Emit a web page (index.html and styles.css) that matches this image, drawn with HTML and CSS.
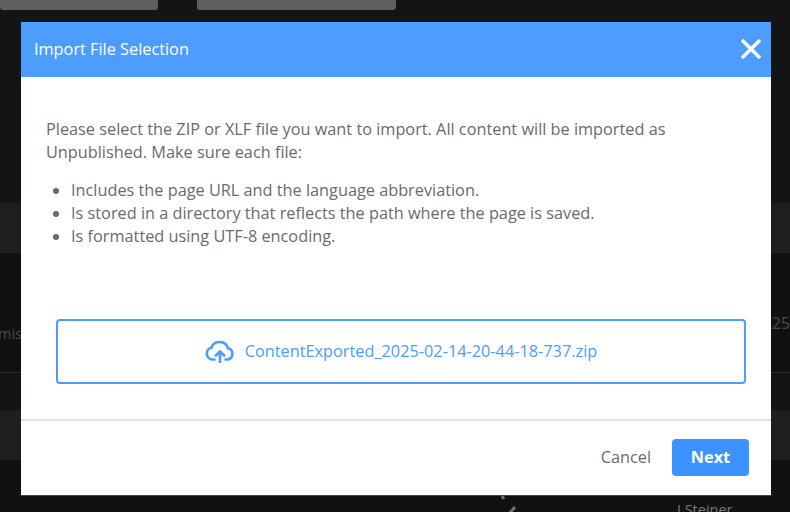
FILE: index.html
```html
<!DOCTYPE html>
<html lang="en">
<head>
<meta charset="utf-8">
<title>Import File Selection</title>
<link rel="stylesheet" href="styles.css">
</head>
<body>
<div class="backdrop">
  <div class="top-actions">
    <span class="top-btn top-btn-a"></span>
    <span class="top-btn top-btn-b"></span>
  </div>
  <div class="band band-first"></div>
  <div class="row">
    <span class="row-left">mis</span>
    <span class="row-right">25</span>
  </div>
  <div class="band band-second"></div>
  <div class="row-last">
    <svg class="row-check" viewBox="0 0 24 20" aria-hidden="true"><path d="M3 0l2 3M8 20l8-9" fill="none" stroke="#6e6f71" stroke-width="3"/></svg>
    <span class="row-name">J Steiner</span>
  </div>
</div>
<div class="modal" role="dialog" aria-labelledby="modal-title">
  <header class="modal-header">
    <h1 class="modal-title" id="modal-title">Import File Selection</h1>
    <button class="close" aria-label="Close">
      <svg viewBox="0 0 20 20" width="20" height="20" aria-hidden="true"><path d="M1 1l18 18M19 1L1 19" fill="none" stroke="#fff" stroke-width="3.4"/></svg>
    </button>
  </header>
  <div class="modal-body">
    <p class="intro">Please select the ZIP or XLF file you want to import. All content will be imported as Unpublished. Make sure each file:</p>
    <ul class="rules">
      <li>Includes the page URL and the language abbreviation.</li>
      <li>Is stored in a directory that reflects the path where the page is saved.</li>
      <li>Is formatted using UTF-8 encoding.</li>
    </ul>
    <div class="dropzone">
      <svg class="cloud" viewBox="0 0 30 22" width="30" height="22" aria-hidden="true">
        <path d="M9.500 18.500H7.500A6 6 0 0 1 6.300 6.700 8.800 8.800 0 0 1 23 7.300a5.700 5.700 0 0 1-.5 11.200H20.500" fill="none" stroke="#4d9dff" stroke-width="2.600" stroke-linecap="round"/>
        <path d="M15 21.500V10.500M10.800 14.500l4.200-4.200 4.200 4.200" fill="none" stroke="#4d9dff" stroke-width="2.600" stroke-linecap="round" stroke-linejoin="round"/>
      </svg>
      <span class="file-name">ContentExported_2025-02-14-20-44-18-737.zip</span>
    </div>
  </div>
  <footer class="modal-footer">
    <button class="btn-cancel">Cancel</button>
    <button class="btn-next">Next</button>
  </footer>
</div>
</body>
</html>
```
FILE: styles.css
```css
* { box-sizing: border-box; }
html, body { margin: 0; height: 100%; }
body {
  position: relative;
  width: 790px;
  height: 512px;
  overflow: hidden;
  background: #131416;
  font-family: "Open Sans", "Noto Sans", sans-serif;
}
.backdrop { display: flex; flex-direction: column; height: 512px; overflow: hidden; }
.top-actions { display: flex; gap: 39px; height: 203px; flex: none; }
.top-btn { display: block; height: 10px; background: #5f5f5f; border-radius: 0 0 3px 3px; }
.top-btn-a { width: 158px; }
.top-btn-b { width: 199px; }
.band { flex: none; height: 50px; background: #1e1e1e; }
.row {
  flex: none; height: 120px; padding-top: 70px;
  display: flex; justify-content: space-between; align-items: flex-start;
  border-bottom: 1px solid #2a2a2a;
  background: #111112; color: #4a4a4a; font-size: 14.5px; line-height: 22px;
}
.row-left { margin-left: -2px; }
.row-right { margin: -11px 0 0; font-size: 16px; }
.band-second { margin-top: 37px; }
.row-last { position: relative; flex: none; height: 52px; background: #111112; color: #77787a; font-size: 14.5px; }
.row-check { position: absolute; left: 499px; top: 36px; width: 24px; height: 20px; }
.row-name { position: absolute; left: 677px; top: 40px; }

.modal {
  position: absolute; left: 21px; top: 22px; width: 750px; height: 473px;
  display: flex; flex-direction: column; background: #fff;
  box-shadow: 0 1px 0 #444;
}
.modal-header {
  flex: none; height: 55px; padding: 0 10px 2px 13px;
  display: flex; align-items: center; justify-content: space-between;
  background: #4d9dff; color: #fff;
}
.modal-title { margin: 0; font-size: 16.3px; font-weight: 400; }
.close { padding: 0; border: 0; background: none; display: flex; }
.modal-body { flex: 1; padding: 41px 25px 0; color: #6a6a6a; font-size: 16.3px; line-height: 23px; }
.intro { margin: 0; }
.rules { margin: 15px 0 0; padding-left: 25px; }
.dropzone {
  margin: 71px 0 0 10px; width: 690px; height: 65px;
  display: flex; align-items: center; justify-content: center; gap: 10px;
  border: 2px solid #4d9dff; border-radius: 4px; color: #4d9dff;
}
.modal-footer {
  flex: none; height: 76px; padding: 18px 22px 0 0;
  display: flex; justify-content: flex-end; align-items: flex-start; gap: 21px;
  border-top: 2px solid #e2e2e2;
}
.btn-cancel { height: 35px; padding: 0; border: 0; background: none; color: #6a6a6a; font: inherit; font-size: 16.3px; }
.btn-next { width: 77px; height: 37px; padding: 0 0 2px; border: 0; border-radius: 4px; background: #3c93ff; color: #fff; font: inherit; font-size: 16.3px; font-weight: 700; }
```
